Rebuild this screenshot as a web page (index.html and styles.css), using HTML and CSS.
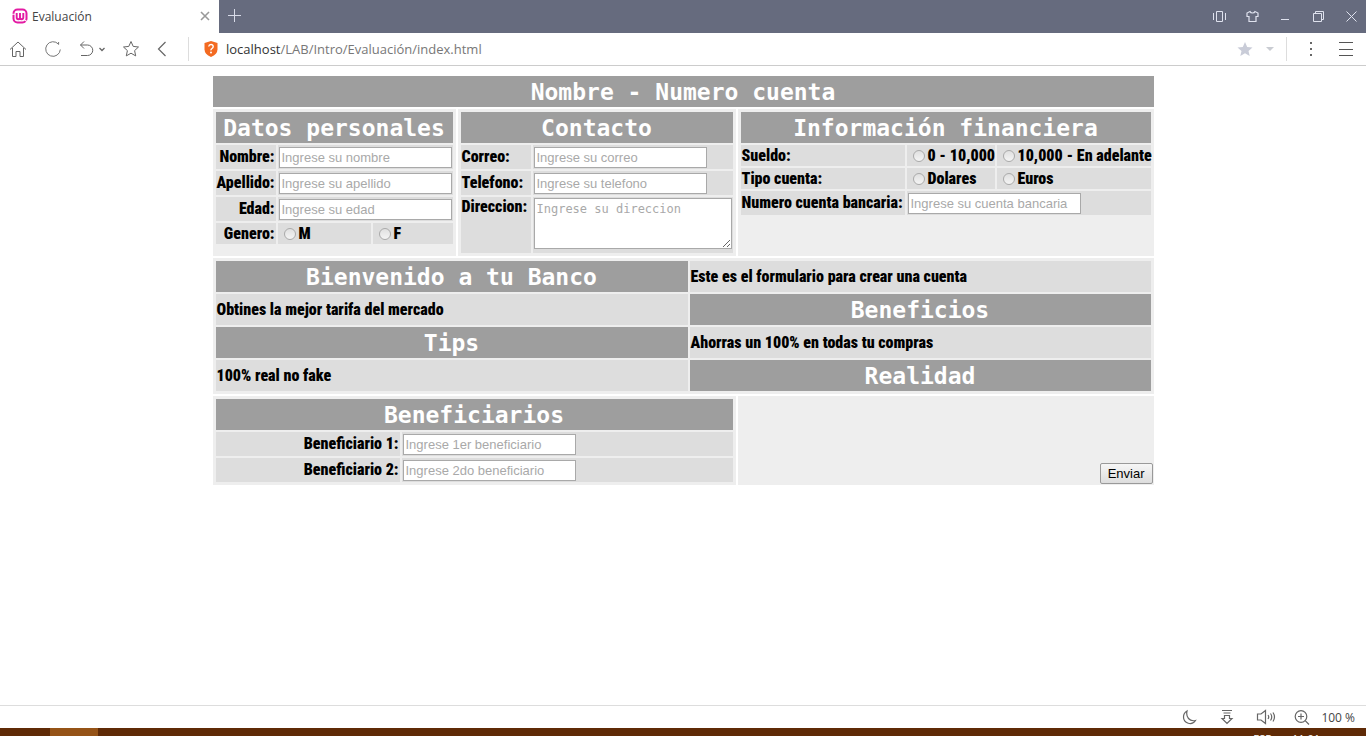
FILE: index.html
```html
<!DOCTYPE html>
<html lang="es">
<head>
<meta charset="utf-8">
<title>Evaluación</title>
<link rel="stylesheet" href="styles.css">
</head>
<body>
<header class="tabbar">
  <div class="tab">
    <svg class="favicon" width="16" height="16" viewBox="0 0 16 16"><rect x="1" y="1" width="14" height="14" rx="4" fill="#fbd3ee"/><rect x="1.5" y="1.5" width="13" height="13" rx="4" fill="#fff" stroke="#e31ba3" stroke-width="2" stroke-dasharray="18 1"/><path d="M4.700 5v4.500q0 1.700 1.600 1.700t1.700-1.700V5v4.500q0 1.700 1.600 1.700t1.700-1.700V5" fill="none" stroke="#e31ba3" stroke-width="1.900"/></svg>
    <span class="tab-title">Evaluación</span>
    <button class="icon-btn" aria-label="Cerrar pestaña"><svg width="10" height="10" viewBox="0 0 10 10"><path d="M1 1l8 8M9 1l-8 8" stroke="#999" stroke-width="1.600"/></svg></button>
  </div>
  <button class="icon-btn new-tab" aria-label="Nueva pestaña"><svg width="13" height="13" viewBox="0 0 13 13"><path d="M6.500 0v13M0 6.500h13" stroke="#d8dbe8"/></svg></button>
  <div class="window-buttons">
    <button class="icon-btn" aria-label="Vista lateral"><svg width="13" height="13" viewBox="0 0 13 13" fill="none" stroke="#dfe2ee"><path d="M.500 3v7M12.500 3v7M3.500 1.500h6v10h-6z"/></svg></button>
    <button class="icon-btn" aria-label="Temas"><svg width="13" height="13" viewBox="0 0 13 13" fill="none" stroke="#dfe2ee" stroke-width="1.200"><path d="M4 1.500L1 3v3.500h2v5h7v-5h2V3L9 1.500Q8.500 3 6.500 3T4 1.500z"/></svg></button>
    <button class="icon-btn" aria-label="Minimizar"><svg width="13" height="13" viewBox="0 0 13 13"><path d="M2 9.500h8" stroke="#dfe2ee"/></svg></button>
    <button class="icon-btn" aria-label="Restaurar"><svg width="13" height="13" viewBox="0 0 13 13" fill="none" stroke="#dfe2ee"><path d="M1.500 3.500h8v8h-8zM3.500 3V1.500h8v8H10"/></svg></button>
    <button class="icon-btn" aria-label="Cerrar"><svg width="13" height="13" viewBox="0 0 13 13"><path d="M1.500 1.500l10 10M11.500 1.500l-10 10" stroke="#dfe2ee"/></svg></button>
  </div>
</header>
<nav class="toolbar">
  <div class="nav-buttons">
    <button class="icon-btn" aria-label="Inicio"><svg width="18" height="18" viewBox="0 0 18 18" fill="none" stroke="#666"><path d="M1 9.500L9 2l8 7.500M3.500 8v8.500h3.500v-5h4v5h3.500V8"/></svg></button>
    <button class="icon-btn reload" aria-label="Recargar"><svg width="18" height="18" viewBox="0 0 18 18" fill="none" stroke="#777"><path d="M16.300 9.500A7.300 7.300 0 1 1 14.500 4.200M14.600 2v2.600"/></svg></button>
    <button class="icon-btn undo" aria-label="Deshacer"><svg width="26" height="18" viewBox="0 0 26 18" fill="none" stroke="#666"><path d="M5 1.500L1.500 5 5 8.500M1.500 5H8.500a5.250 5.250 0 0 1 0 10.500H2"/><path d="M20.500 8l2.500 2.500L25.500 8" stroke-width="1.300"/></svg></button>
    <button class="icon-btn favorite" aria-label="Favoritos"><svg width="18" height="18" viewBox="0 0 18 18" fill="none" stroke="#666"><path d="M9 1.500l2.200 4.900 5.300.600-3.900 3.600 1.100 5.300L9 13.200l-4.700 2.700 1.100-5.300L1.500 7l5.300-.600z"/></svg></button>
    <button class="icon-btn back" aria-label="Atrás"><svg width="10" height="16" viewBox="0 0 10 16" fill="none" stroke="#666" stroke-width="1.200"><path d="M8.500 1l-7 7 7 7"/></svg></button>
  </div>
  <div class="address">
    <svg width="14" height="16" viewBox="0 0 14 16"><path d="M7 0l6.500 2v6.500Q13.500 13 7 16 .500 13 .500 8.500V2z" fill="#f36a21"/><path d="M4.700 5.500Q5 3.500 7 3.500t2.200 2Q9.200 6.800 8 7.500T7 9.300" fill="none" stroke="#fff" stroke-width="1.400"/><circle cx="7" cy="11.500" r="1" fill="#fff"/></svg>
    <a class="url" href="#"><span class="host">localhost</span>/LAB/Intro/Evaluación/index.html</a>
  </div>
  <div class="tools">
    <button class="icon-btn" aria-label="Marcar"><svg width="16" height="16" viewBox="0 0 16 16"><path d="M8 1l2.200 4.900 5.300.500-4 3.500 1.200 5.100L8 12.300 3.300 15l1.200-5.100-4-3.500 5.300-.500z" fill="#c9ccd8"/></svg></button>
    <button class="icon-btn drop" aria-label="Más marcadores"><svg width="8" height="4" viewBox="0 0 8 4"><path d="M0 0h8L4 4z" fill="#c9ccd2"/></svg></button>
    <button class="icon-btn dots" aria-label="Opciones"><svg width="4" height="16" viewBox="0 0 4 16" fill="#666"><path d="M1 1h2v2H1zM1 7h2v2H1zM1 13h2v2H1z"/></svg></button>
    <button class="icon-btn" aria-label="Menú"><svg width="14" height="16" viewBox="0 0 14 16"><path d="M0 1.500h14M0 8.500h14M0 14.500h14" stroke="#555"/></svg></button>
  </div>
</nav>
<main class="page">
  <form class="bank">
    <h1 class="title bank-title">Nombre - Numero cuenta</h1>
    <section class="panel personal">
      <h2 class="title">Datos personales</h2>
      <label class="cell right" for="nombre">Nombre:</label>
      <div class="cell wide"><input class="field" id="nombre" placeholder="Ingrese su nombre"></div>
      <label class="cell right" for="apellido">Apellido:</label>
      <div class="cell wide"><input class="field" id="apellido" placeholder="Ingrese su apellido"></div>
      <label class="cell right" for="edad">Edad:</label>
      <div class="cell wide"><input class="field" id="edad" placeholder="Ingrese su edad"></div>
      <div class="cell short right">Genero:</div>
      <label class="cell short"><input class="radio" type="radio" name="genero">M</label>
      <label class="cell short"><input class="radio" type="radio" name="genero">F</label>
    </section>
    <section class="panel contact">
      <h2 class="title">Contacto</h2>
      <label class="cell" for="correo">Correo:</label>
      <div class="cell"><input class="field" id="correo" placeholder="Ingrese su correo"></div>
      <label class="cell" for="telefono">Telefono:</label>
      <div class="cell"><input class="field" id="telefono" placeholder="Ingrese su telefono"></div>
      <label class="cell top" for="direccion">Direccion:</label>
      <div class="cell top"><textarea class="area" id="direccion" placeholder="Ingrese su direccion"></textarea></div>
    </section>
    <section class="panel finance">
      <h2 class="title">Información financiera</h2>
      <div class="cell short">Sueldo:</div>
      <label class="cell short"><input class="radio" type="radio" name="sueldo">0 - 10,000</label>
      <label class="cell short"><input class="radio" type="radio" name="sueldo">10,000 - En adelante</label>
      <div class="cell short">Tipo cuenta:</div>
      <label class="cell short"><input class="radio" type="radio" name="tipo">Dolares</label>
      <label class="cell short"><input class="radio" type="radio" name="tipo">Euros</label>
      <label class="cell" for="cuenta">Numero cuenta bancaria:</label>
      <div class="cell wide"><input class="field" id="cuenta" placeholder="Ingrese su cuenta bancaria"></div>
    </section>
    <section class="panel info">
      <h2 class="title">Bienvenido a tu Banco</h2>
      <p class="cell">Este es el formulario para crear una cuenta</p>
      <p class="cell">Obtines la mejor tarifa del mercado</p>
      <h2 class="title">Beneficios</h2>
      <h2 class="title">Tips</h2>
      <p class="cell">Ahorras un 100% en todas tu compras</p>
      <p class="cell">100% real no fake</p>
      <h2 class="title">Realidad</h2>
    </section>
    <section class="panel beneficiaries">
      <h2 class="title">Beneficiarios</h2>
      <label class="cell right" for="ben1">Beneficiario 1:</label>
      <div class="cell"><input class="field" id="ben1" placeholder="Ingrese 1er beneficiario"></div>
      <label class="cell right" for="ben2">Beneficiario 2:</label>
      <div class="cell"><input class="field" id="ben2" placeholder="Ingrese 2do beneficiario"></div>
    </section>
    <div class="submit"><button class="send" type="button">Enviar</button></div>
  </form>
</main>
<footer class="statusbar">
  <button class="icon-btn" aria-label="Modo nocturno"><svg width="16" height="16" viewBox="0 0 16 16" fill="none" stroke="#666" stroke-width="1.200"><path d="M5 2Q1.500 4 1.500 8a6.500 6.500 0 0 0 12 3.500Q9 12.500 6.500 9.500T5 2z"/></svg></button>
  <button class="icon-btn" aria-label="Descargas"><svg width="16" height="16" viewBox="0 0 16 16" fill="none" stroke="#666" stroke-width="1.200"><path d="M3 1.500h10M4.500 4h7M5.500 6.500h5v3H13L8 14.500 3 9.500h2.500z"/></svg></button>
  <button class="icon-btn sound" aria-label="Sonido"><svg width="20" height="16" viewBox="0 0 20 16" fill="none" stroke="#666" stroke-width="1.200"><path d="M1.500 5h3.500l4.500-3.500v13L5 11H1.500zM12 6q1.500 2 0 4M14.500 4.500q2.500 3.500 0 7M17 3.500q3 4.500 0 9"/></svg></button>
  <button class="icon-btn" aria-label="Zoom"><svg width="16" height="16" viewBox="0 0 16 16" fill="none" stroke="#666" stroke-width="1.200"><circle cx="7" cy="7.500" r="5.800"/><path d="M11.200 11.700l3.800 3.800M4 7.500h6M7 4.500v6"/></svg></button>
  <span class="zoom-level">100 %</span>
</footer>
<div class="taskbar"><div class="task"></div><span class="lang">ESP</span><span class="clock">11:01</span></div>
</body>
</html>
```
FILE: styles.css
```css
* { box-sizing: border-box; }
body {
  margin: 0;
  height: 100vh;
  display: flex;
  flex-direction: column;
  overflow: hidden;
  background: #fff;
  font-family: "Segoe UI", "Open Sans", "Noto Sans", sans-serif;
}
.icon-btn { display: flex; align-items: center; justify-content: center; padding: 0; border: 0; background: none; }

.tabbar { display: flex; flex: none; height: 33px; background: #666b7e; }
.tab { display: flex; align-items: center; width: 219px; padding: 0 9px 1px 12px; background: #fff; }
.favicon { margin-right: 4px; }
.tab-title { flex: 1; font-size: 12px; color: #444; }
.new-tab { margin: 0 0 2px 9px; }
.window-buttons { display: flex; align-items: center; gap: 20px; margin-left: auto; padding-right: 8px; }

.toolbar { display: flex; align-items: center; flex: none; height: 33px; border-bottom: 1px solid #ccc; padding-left: 9px; }
.nav-buttons { display: flex; align-items: center; width: 180px; height: 24px; border-right: 1px solid #ddd; }
.reload { margin-left: 17px; }
.undo { margin-left: 17px; }
.favorite { margin-left: 17px; }
.back { margin-left: 17px; }
.address { display: flex; align-items: center; flex: 1; padding-left: 15px; gap: 8px; }
.url { font-size: 13px; color: #777; text-decoration: none; }
.host { color: #333; }
.tools { display: flex; align-items: center; height: 24px; padding-right: 13px; }
.drop { width: 26px; height: 24px; margin-left: 8px; padding-right: 8px; border-right: 1px solid #ddd; }
.dots { margin: 0 26px 0 22px; }

.page { flex: 1; min-height: 0; padding: 10px 8px; }
.bank {
  display: grid;
  grid-template-columns: 243fr 278fr 416fr;
  gap: 2px;
  max-width: 941px;
  margin: 0 auto;
  font: 900 16px/20px Impact, "Roboto Condensed", "Liberation Sans", sans-serif;
  color: #000;
}
.title {
  grid-column: 1 / -1;
  margin: 0;
  padding: 2px 1px 0;
  background: #9e9e9e;
  color: #fff;
  font: bold 23px/29px Consolas, "DejaVu Sans Mono", monospace;
  text-align: center;
  white-space: nowrap;
}
.panel { display: grid; align-content: start; gap: 2px; padding: 3px; background: #eee; }
.personal { grid-template-columns: 60fr 93fr 80fr; }
.contact { grid-template-columns: 70fr 200fr; }
.finance { grid-template-columns: 164fr 88fr 154fr; }
.info { grid-column: 1 / -1; grid-template-columns: 472fr 461fr; }
.beneficiaries { grid-column: 1 / 3; grid-template-columns: 184fr 331fr; }
.cell {
  display: flex;
  align-items: center;
  min-width: 0;
  min-height: 24px;
  margin: 0;
  padding: 0 1px;
  background: #ddd;
  white-space: nowrap;
}
.short { min-height: 21px; }
.wide { grid-column: span 2; }
.right { justify-content: flex-end; }
.top { align-items: flex-start; }
.info .title { grid-column: auto; }
.field {
  width: 173px;
  height: 21px;
  margin: 1px 0 0;
  padding: 1px 2px;
  border: 1px solid #a9a9a9;
  background: #fff;
  font: 13px "Liberation Sans", Arial, sans-serif;
}
.area {
  width: 198px;
  height: 51px;
  margin: 1px 0 4px;
  padding: 2px;
  border: 1px solid #a9a9a9;
  background: #fff;
  font: 12px/16px Consolas, "DejaVu Sans Mono", monospace;
  resize: both;
}
.field::placeholder, .area::placeholder { color: #a9a9a9; }
.radio {
  appearance: none;
  flex: none;
  width: 12px;
  height: 12px;
  margin: 0 3px 0 5px;
  border: 1px solid #aaa;
  border-radius: 50%;
  background: linear-gradient(#e0e0e0, #f4f4f4);
}
.submit { display: flex; align-items: flex-end; justify-content: flex-end; padding: 1px; background: #eee; }
.send {
  padding: 2px 7px;
  border: 1px solid #999;
  border-radius: 2px;
  background: linear-gradient(#f6f6f6, #ddd);
  color: #000;
  font: 13px "Liberation Sans", Arial, sans-serif;
}

.statusbar { display: flex; align-items: center; justify-content: flex-end; flex: none; gap: 21px; height: 23px; padding-right: 11px; border-top: 1px solid #ddd; }
.sound { margin-right: -3px; }
.zoom-level { margin-left: -10px; font-size: 12px; color: #444; }
.taskbar { display: flex; flex: none; height: 8px; overflow: hidden; background: #5f2a06; color: #fff; font-size: 11px; line-height: 16px; padding: 0 46px 0 50px; }
.task { width: 48px; margin-right: auto; background: #955317; }
.lang { margin: 3px 20px 0 0; }
.clock { margin-top: 3px; }
```
